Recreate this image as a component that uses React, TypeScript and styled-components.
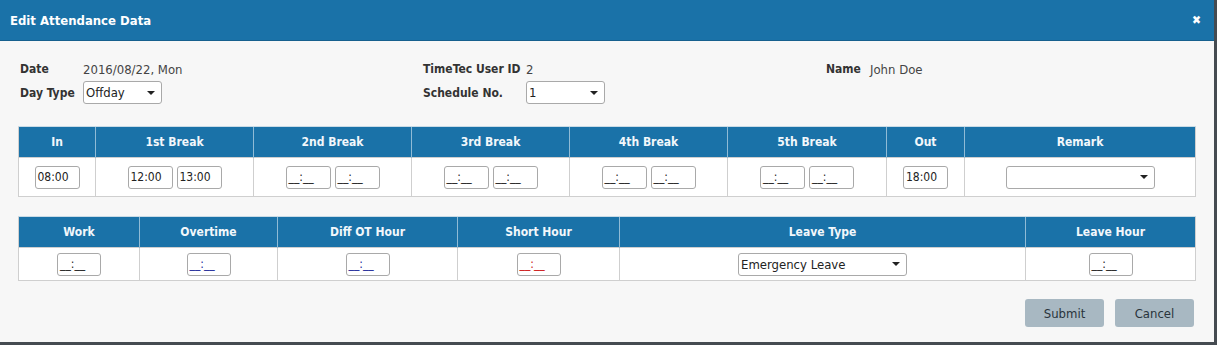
import React from "react";
import styled, { createGlobalStyle } from "styled-components";

const FONT = `"DejaVu Sans Condensed", "DejaVu Sans", sans-serif`;

const Global = createGlobalStyle`
  html, body { margin: 0; padding: 0; background: #454b51; }
  body { font-family: ${FONT}; width: 1217px; height: 345px; overflow: hidden; }
  * { box-sizing: border-box; }
`;

const Modal = styled.div`
  width: 1214px;
  height: 342px;
  background: #f7f7f7;
  display: flex;
  flex-direction: column;
`;

const Header = styled.div`
  height: 41px;
  background: #1a72a8;
  display: flex;
  align-items: center;
  justify-content: space-between;
  padding: 0 13px 0 10px;
  color: #fff;
  border-bottom: 1px solid #16608e;
`;

const Title = styled.div`
  font-size: 13px;
  font-weight: bold;
`;

const Close = styled.div`
  font-size: 12px;
  font-weight: bold;
  line-height: 1;
`;

const Body = styled.div`
  padding: 19px 19px 0 18px;
  display: flex;
  flex-direction: column;
`;

const Info = styled.div`
  display: grid;
  grid-template-columns: 403px 403px 1fr;
  grid-template-rows: 18px 23px;
  row-gap: 3px;
  padding-left: 2px;
  margin-bottom: 22px;
`;

const Field = styled.div`
  display: flex;
  align-items: center;
  font-size: 12px;
`;

const Label = styled.span<{ $w: number }>`
  width: ${(p) => p.$w}px;
  font-weight: bold;
  color: #333;
`;

const Value = styled.span`
  color: #444;
  font-size: 13px;
`;

const Select = styled.div<{ $w: number }>`
  width: ${(p) => p.$w}px;
  height: 23px;
  border: 1px solid #a9a9a9;
  border-radius: 3px;
  background: #fff;
  display: flex;
  align-items: center;
  justify-content: space-between;
  padding: 0 6px 0 2px;
  font-size: 13px;
  color: #222;
`;

const Caret = styled.span`
  width: 0;
  height: 0;
  border-left: 4px solid transparent;
  border-right: 4px solid transparent;
  border-top: 4px solid #222;
`;

const Table = styled.table<{ $mb: number }>`
  width: 1177px;
  border-collapse: collapse;
  table-layout: fixed;
  margin-bottom: ${(p) => p.$mb}px;
  border: 1px solid #cfcfcf;
`;

const Th = styled.th`
  background: #1a72a8;
  color: #f2f7fb;
  font-size: 12px;
  font-weight: bold;
  height: 31px;
  padding: 0;
  border-left: 1px solid #8fbbd6;
  border-top: 1px solid #c9dbe6;
  &:first-child { border-left: 1px solid #cfcfcf; }
`;

const Td = styled.td<{ $h: number }>`
  background: #fff;
  height: ${(p) => p.$h}px;
  padding: 0;
  border: 1px solid #cfcfcf;
  text-align: center;
  vertical-align: middle;
`;

const Pair = styled.div`
  display: flex;
  justify-content: center;
  gap: 4px;
`;

const TimeBox = styled.div<{ $w?: number; $c?: string }>`
  width: ${(p) => p.$w ?? 45}px;
  height: 23px;
  border: 1px solid #a9a9a9;
  border-radius: 3px;
  background: #fff;
  display: inline-flex;
  align-items: center;
  padding-left: 2px;
  font-size: 12px;
  color: ${(p) => p.$c ?? "#222"};
`;

const Footer = styled.div`
  display: flex;
  justify-content: flex-end;
  gap: 11px;
  padding-right: 1px;
`;

const Button = styled.button`
  width: 79px;
  height: 28px;
  border: none;
  border-radius: 3px;
  background: #a8b8c2;
  color: #2a343c;
  font-family: ${FONT};
  font-size: 13px;
`;

const cols1 = [77, 158, 158, 158, 158, 159, 78, 231];
const cols2 = [121, 138, 180, 162, 406, 170];

const Empty = ({ c, w }: { c?: string; w?: number }) => (
  <TimeBox $c={c} $w={w}>__:__</TimeBox>
);

export default function App() {
  return (
    <>
      <Global />
      <Modal>
        <Header>
          <Title>Edit Attendance Data</Title>
          <Close>✖</Close>
        </Header>
        <Body>
          <Info>
            <Field>
              <Label $w={63}>Date</Label>
              <Value>2016/08/22, Mon</Value>
            </Field>
            <Field>
              <Label $w={103}>TimeTec User ID</Label>
              <Value>2</Value>
            </Field>
            <Field>
              <Label $w={44}>Name</Label>
              <Value>John Doe</Value>
            </Field>
            <Field>
              <Label $w={63}>Day Type</Label>
              <Select $w={79}>
                Offday
                <Caret />
              </Select>
            </Field>
            <Field>
              <Label $w={103}>Schedule No.</Label>
              <Select $w={79}>
                1
                <Caret />
              </Select>
            </Field>
            <div />
          </Info>

          <Table $mb={19}>
            <colgroup>
              {cols1.map((w, i) => (
                <col key={i} style={{ width: w }} />
              ))}
            </colgroup>
            <thead>
              <tr>
                {["In", "1st Break", "2nd Break", "3rd Break", "4th Break", "5th Break", "Out", "Remark"].map((h) => (
                  <Th key={h}>{h}</Th>
                ))}
              </tr>
            </thead>
            <tbody>
              <tr>
                <Td $h={39}>
                  <TimeBox>08:00</TimeBox>
                </Td>
                <Td $h={39}>
                  <Pair>
                    <TimeBox>12:00</TimeBox>
                    <TimeBox>13:00</TimeBox>
                  </Pair>
                </Td>
                {[0, 1, 2, 3].map((i) => (
                  <Td $h={39} key={i}>
                    <Pair>
                      <Empty />
                      <Empty />
                    </Pair>
                  </Td>
                ))}
                <Td $h={39}>
                  <TimeBox>18:00</TimeBox>
                </Td>
                <Td $h={39}>
                  <Pair>
                    <Select $w={149}>
                      <span />
                      <Caret />
                    </Select>
                  </Pair>
                </Td>
              </tr>
            </tbody>
          </Table>

          <Table $mb={18}>
            <colgroup>
              {cols2.map((w, i) => (
                <col key={i} style={{ width: w }} />
              ))}
            </colgroup>
            <thead>
              <tr>
                {["Work", "Overtime", "Diff OT Hour", "Short Hour", "Leave Type", "Leave Hour"].map((h) => (
                  <Th key={h}>{h}</Th>
                ))}
              </tr>
            </thead>
            <tbody>
              <tr>
                <Td $h={33}>
                  <Empty w={44} />
                </Td>
                <Td $h={33}>
                  <Empty w={44} c="#1a2a99" />
                </Td>
                <Td $h={33}>
                  <Empty w={44} c="#1a2a99" />
                </Td>
                <Td $h={33}>
                  <Empty w={44} c="#cc1111" />
                </Td>
                <Td $h={33}>
                  <Pair>
                    <Select $w={169}>
                      Emergency Leave
                      <Caret />
                    </Select>
                  </Pair>
                </Td>
                <Td $h={33}>
                  <Empty w={44} />
                </Td>
              </tr>
            </tbody>
          </Table>

          <Footer>
            <Button>Submit</Button>
            <Button>Cancel</Button>
          </Footer>
        </Body>
      </Modal>
    </>
  );
}
